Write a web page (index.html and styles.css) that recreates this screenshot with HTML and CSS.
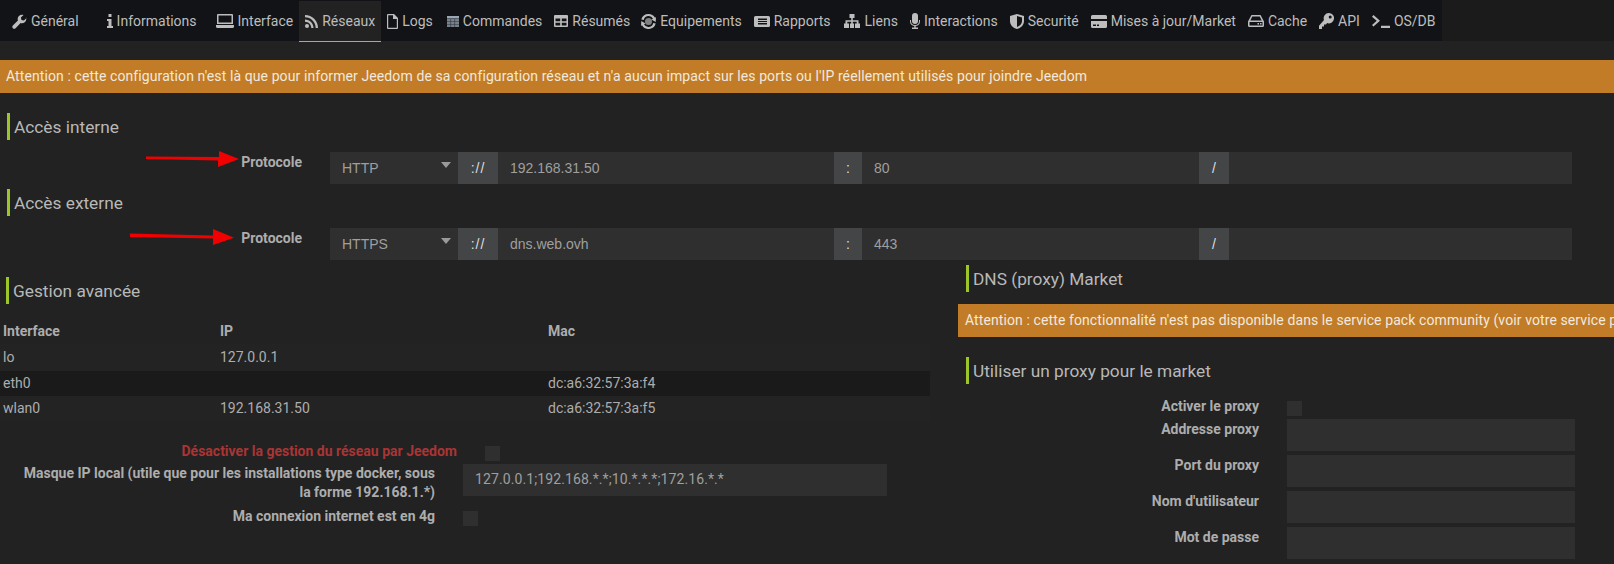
FILE: index.html
```html
<!DOCTYPE html>
<html lang="fr">
<head>
    <meta charset="UTF-8">
    <title>Configuration - Réseaux</title>
    <link rel="stylesheet" href="styles.css">
</head>
<body>
    <div class="topbar">
        <div class="nav">
            <a class="tab"><svg width="15" height="15" viewBox="0 0 16 16"><path d="M15.5 4.2l-2.8 2.8-2.6-.6-.6-2.6L12.3 1C10.6.4 8.7.8 7.4 2.1 6.1 3.4 5.8 5.2 6.3 6.8L.9 12.2c-.8.8-.8 2.1 0 2.9.8.8 2.1.8 2.9 0l5.4-5.4c1.6.5 3.4.2 4.7-1.1 1.3-1.3 1.7-3.2 1.1-4.8z"/></svg>Général</a>
            <a class="tab tab-info"><svg width="6" height="14" viewBox="0 0 6 14"><path d="M1.5 0h3v3h-3zM0 5h4.5v7H6v2H0v-2h1.5V7H0z"/></svg>Informations</a>
            <a class="tab tab-interface"><svg width="18" height="14" viewBox="0 0 18 14"><path d="M2 0h14a1 1 0 0 1 1 1v9H1V1a1 1 0 0 1 1-1zm.5 1.5v7h13v-7zM0 11h18v1.5a1.5 1.5 0 0 1-1.5 1.5h-15A1.5 1.5 0 0 1 0 12.5z"/></svg>Interface</a>
            <a class="tab active"><svg width="13" height="13" viewBox="0 0 13 13"><circle cx="2" cy="11" r="2"/><path d="M0 4.5c4.7 0 8.500 3.800 8.500 8.500H6.300C6.300 9.500 3.500 6.700 0 6.700zM0 0c7.200 0 13 5.800 13 13h-2.300C10.700 7.100 5.900 2.300 0 2.300z"/></svg>Réseaux</a>
            <a class="tab"><svg width="11" height="15" viewBox="0 0 11 15"><path d="M1 0h6l4 4v10a1 1 0 0 1-1 1H1a1 1 0 0 1-1-1V1a1 1 0 0 1 1-1zm.2 1.200v12.600h8.600V5H6V1.200z"/></svg>Logs</a>
            <a class="tab tab-cmd"><svg class="ico-calc" width="12" height="11" viewBox="0 0 12 11"><path d="M0 0h12v2.500H0z"/><path opacity=".75" d="M0 3h12v8H0z"/><path fill="#121316" opacity=".7" d="M3.500 3h.6v8h-.6zM7.500 3h.6v8h-.6zM0 5.500h12v.6H0zM0 8h12v.6H0z"/></svg>Commandes</a>
            <a class="tab tab-resumes"><svg width="14" height="12" viewBox="0 0 14 12"><path fill-rule="evenodd" d="M1 0h12a1 1 0 0 1 1 1v10a1 1 0 0 1-1 1H1a1 1 0 0 1-1-1V1a1 1 0 0 1 1-1zm.500 3.500v2.800h4.700V3.500zm6.300 0v2.800h4.700V3.500zM1.500 7.700v2.800h4.700V7.700zm6.300 0v2.800h4.700V7.700z"/></svg>Résumés</a>
            <a class="tab"><svg width="15" height="15" viewBox="0 0 15 15"><path fill-rule="evenodd" d="M7.500 0a7.500 7.500 0 0 1 6.500 3.700L15 3l-.3 5-4.200-2.500 1.500-.8a5 5 0 0 0-9.300 1.300L.3 5.500A7.500 7.500 0 0 1 7.500 0zM.3 7l4.200 2.500-1.500.8a5 5 0 0 0 9.300-1.300l2.400.5A7.500 7.500 0 0 1 1 11.300L0 12z"/><circle cx="7.500" cy="7.500" r="3.500" opacity=".65"/></svg>Equipements</a>
            <a class="tab"><svg width="16" height="11" viewBox="0 0 16 11"><path fill-rule="evenodd" d="M1.500 0h13A1.500 1.500 0 0 1 16 1.500v8a1.500 1.500 0 0 1-1.500 1.500h-13A1.500 1.500 0 0 1 0 9.500v-8A1.500 1.500 0 0 1 1.500 0zM4 2.500V4h9V2.500zM4 5v1h9V5zm0 2v1.500h9V7z"/></svg>Rapports</a>
            <a class="tab"><svg width="18" height="14" viewBox="0 0 18 14"><path d="M6.500 0h5v4h-1.700v2.200H15.500V9.500h1.500V14h-5V9.500h1.700V7.800H9.800v1.700h1.200V14H7V9.500h1.200V7.800H4.300v1.700H6V14H1V9.500h1.500V6.200h5.700V4H6.500z"/></svg>Liens</a>
            <a class="tab"><svg width="10" height="16" viewBox="0 0 10 16"><path d="M5 0a3 3 0 0 1 3 3v5a3 3 0 0 1-6 0V3a3 3 0 0 1 3-3z"/><path d="M0 7h1v1a4 4 0 0 0 8 0V7h1v1a5 5 0 0 1-4.300 5v1.500H8V16H2v-1.500h2.300V13A5 5 0 0 1 0 8z"/></svg>Interactions</a>
            <a class="tab"><svg width="14" height="15" viewBox="0 0 14 15"><path fill-rule="evenodd" d="M7 0l7 2v5c0 4-3 7-7 8-4-1-7-4-7-8V2zm0 2v11c2.800-1 5-3.200 5-6V3.400z"/></svg>Securité</a>
            <a class="tab"><svg width="16" height="13" viewBox="0 0 16 13"><path fill-rule="evenodd" d="M1.500 0h13A1.500 1.500 0 0 1 16 1.500V4H0V1.500A1.500 1.500 0 0 1 1.500 0zM0 6h16v5.500a1.500 1.500 0 0 1-1.500 1.500h-13A1.500 1.500 0 0 1 0 11.500zm2 3.500V11h3V9.500zm4 0V11h2V9.500z"/></svg>Mises à jour/Market</a>
            <a class="tab"><svg width="16" height="12" viewBox="0 0 16 12"><path fill-rule="evenodd" d="M3.500 0h9L16 6.500v4A1.500 1.500 0 0 1 14.500 12h-13A1.500 1.500 0 0 1 0 10.500v-4zm.800 1.500L2.300 5.500h11.400l-2-4zM1.500 7v3.500h13V7zM9.500 8h1.500v1.500H9.500zm2.500 0h1.500v1.500H12z"/></svg>Cache</a>
            <a class="tab"><svg width="15" height="16" viewBox="0 0 15 16"><path fill-rule="evenodd" d="M9.800 0a5.200 5.200 0 1 1-1.700 10.100L7 11.500H5V13.500H3V16H0v-3.300l5-5.700A5.200 5.200 0 0 1 9.800 0zm1.400 2.400a1.500 1.500 0 1 0 0 3 1.500 1.500 0 0 0 0-3z"/></svg>API</a>
            <a class="tab"><svg width="18" height="13" viewBox="0 0 18 13"><path d="M1.500 0l6.500 5.800L1.500 11.600 0 9.900 4.700 5.800 0 1.700zM9 10.800h9V13H9z"/></svg>OS/DB</a>
        </div>
    </div>

    <div class="alert">Attention : cette configuration n'est là que pour informer Jeedom de sa configuration réseau et n'a aucun impact sur les ports ou l'IP réellement utilisés pour joindre Jeedom</div>

    <h3 class="title title-first">Accès interne</h3>
    <div class="proto-row">
        <label class="proto-label">Protocole</label>
        <div class="field select">HTTP</div>
        <div class="addon addon-scheme">://</div>
        <div class="field host">192.168.31.50</div>
        <div class="addon addon-port">:</div>
        <div class="field port">80</div>
        <div class="addon addon-path">/</div>
        <div class="field path"></div>
    </div>

    <h3 class="title title-next">Accès externe</h3>
    <div class="proto-row">
        <label class="proto-label">Protocole</label>
        <div class="field select">HTTPS</div>
        <div class="addon addon-scheme">://</div>
        <div class="field host">dns.web.ovh</div>
        <div class="addon addon-port">:</div>
        <div class="field port">443</div>
        <div class="addon addon-path">/</div>
        <div class="field path"></div>
    </div>

    <div class="columns">
        <div class="col-left">
            <h3 class="title title-advanced">Gestion avancée</h3>
            <table class="net-table">
                <thead>
                    <tr><th>Interface</th><th>IP</th><th>Mac</th></tr>
                </thead>
                <tbody>
                    <tr class="first"><td>lo</td><td>127.0.0.1</td><td></td></tr>
                    <tr class="dark"><td>eth0</td><td></td><td>dc:a6:32:57:3a:f4</td></tr>
                    <tr><td>wlan0</td><td>192.168.31.50</td><td>dc:a6:32:57:3a:f5</td></tr>
                </tbody>
            </table>

            <div class="opt opt-disable">
                <label class="danger">Désactiver la gestion du réseau par Jeedom</label>
                <span class="check"></span>
            </div>
            <div class="opt opt-mask">
                <label>Masque IP local (utile que pour les installations type docker, sous la forme 192.168.1.*)</label>
                <div class="field mask">127.0.0.1;192.168.*.*;10.*.*.*;172.16.*.*</div>
            </div>
            <div class="opt opt-4g">
                <label>Ma connexion internet est en 4g</label>
                <span class="check"></span>
            </div>
        </div>

        <div class="col-right">
            <h3 class="title title-dns">DNS (proxy) Market</h3>
            <div class="alert alert-wide">Attention : cette fonctionnalité n'est pas disponible dans le service pack community (voir votre service pack)</div>
            <h3 class="title title-proxy">Utiliser un proxy pour le market</h3>
            <div class="proxy-form">
                <div class="proxy-row proxy-check"><label>Activer le proxy</label><span class="check"></span></div>
                <div class="proxy-row"><label>Addresse proxy</label><div class="field proxy-input"></div></div>
                <div class="proxy-row"><label>Port du proxy</label><div class="field proxy-input"></div></div>
                <div class="proxy-row"><label>Nom d'utilisateur</label><div class="field proxy-input"></div></div>
                <div class="proxy-row"><label>Mot de passe</label><div class="field proxy-input"></div></div>
            </div>
        </div>
    </div>

    <!-- red arrows annotated on the screenshot -->
    <svg class="arrows" width="300" height="260" viewBox="0 0 300 260">
        <path fill="#f00000" d="M146 156.500l73 .5V151l20 8-21 8v-6.500l-72-1.500z"/>
        <path fill="#f00000" d="M130 233.500l83 2V229l21 8.700-21 7.300v-6.500l-83-1.500z"/>
    </svg>
</body>
</html>
```

FILE: styles.css
```css
* {
    box-sizing: border-box;
}

html, body {
    height: 100%;
}

body {
    margin: 0;
    background-color: #222222;
    color: #adadad;
    font-family: Roboto, Arial, sans-serif;
    font-size: 14px;
    overflow: hidden;
    position: relative;
}

/* top tabs */
.topbar {
    height: 41px;
    background-color: #1b1b1b;
}

.nav {
    display: flex;
    align-items: flex-start;
    width: 1442px;
    height: 41px;
    padding: 1px 0 0 6px;
    background-color: #121316;
}

.tab {
    display: flex;
    align-items: center;
    gap: 4px;
    height: 40px;
    padding: 0 6px;
    color: #bdbdbd;
    white-space: nowrap;
}

.tab svg {
    flex: none;
    fill: currentColor;
}

.tab .ico-calc {
    fill: #9aa7b4;
}

.tab.active {
    height: 41px;
    background-color: #222222;
    border-bottom: 1px solid #9bc52a;
}

.tab-info {
    margin-left: 16px;
}

.tab-interface {
    margin-left: 7px;
}

.tab-cmd {
    margin-left: 2px;
}

.tab-resumes {
    padding-right: 5px;
}

/* orange notices */
.alert {
    height: 33px;
    margin-top: 19px;
    padding-left: 6px;
    line-height: 33px;
    letter-spacing: 0.1px;
    background-color: #c27c27;
    color: #f1e9df;
    white-space: nowrap;
}

.alert-wide {
    width: 700px;
    margin-top: 12px;
    padding-left: 7px;
}

/* section titles */
.title {
    height: 27px;
    margin: 0;
    padding-left: 4px;
    border-left: 3px solid #9bc52a;
    font-size: 17.3px;
    font-weight: 400;
    line-height: 29px;
    color: #b8b8b8;
}

.title-first {
    margin: 20px 0 0 7px;
}

.title-next {
    margin: 5px 0 0 7px;
}

.title-advanced {
    margin: 17px 0 0 6px;
}

.title-dns {
    margin: 5px 0 0 8px;
}

.title-proxy {
    margin: 20px 0 0 8px;
}

/* protocol rows */
.proto-row {
    display: flex;
    height: 32px;
    margin-top: 12px;
}

.proto-label {
    width: 302px;
    margin-right: 28px;
    font-weight: 700;
    line-height: 20px;
    text-align: right;
}

.field {
    height: 32px;
    padding-left: 12px;
    background-color: #2f2f2f;
    color: #9f9f9f;
    font-family: "Liberation Sans", Arial, sans-serif;
    line-height: 32px;
}

.select {
    position: relative;
    width: 128px;
}

.select::after {
    content: "";
    position: absolute;
    top: 10px;
    right: 7px;
    border-left: 5.5px solid transparent;
    border-right: 5.5px solid transparent;
    border-top: 6px solid #9a9a9a;
}

.addon {
    height: 32px;
    background-color: #444547;
    color: #dddddd;
    font-family: "Liberation Sans", Arial, sans-serif;
    line-height: 32px;
    text-align: center;
}

.addon-scheme {
    width: 40px;
    letter-spacing: 1px;
}

.addon-port {
    width: 28px;
}

.addon-path {
    width: 30px;
}

.host {
    width: 336px;
}

.port {
    width: 337px;
}

.path {
    width: 343px;
}

/* bottom columns */
.columns {
    display: flex;
}

.col-left {
    flex: none;
    width: 958px;
}

.col-right {
    flex: 1;
    min-width: 0;
    overflow: hidden;
}

.net-table {
    width: 930px;
    margin-top: 14px;
    border-collapse: collapse;
    table-layout: fixed;
}

.net-table th,
.net-table td {
    padding: 0 0 0 3px;
    text-align: left;
}

.net-table th {
    height: 26px;
    font-weight: 700;
}

.net-table td {
    height: 25px;
    padding-bottom: 2px;
    background-color: #232323;
}

.net-table tr.first td {
    height: 27px;
}

.net-table th:nth-child(1) {
    width: 217px;
}

.net-table th:nth-child(2) {
    width: 328px;
}

.net-table tr.dark td {
    background-color: #1a1a1a;
}

.opt {
    display: flex;
    gap: 28px;
}

.opt label {
    flex: none;
    width: 435px;
    font-weight: 700;
    line-height: 20px;
    text-align: right;
}

.opt-disable {
    margin-top: 20px;
}

.opt-disable label {
    width: 457px;
}

.opt .danger {
    color: #a93535;
}

.opt-mask {
    height: 32px;
    margin-top: 3px;
}

.opt-mask label {
    padding-left: 23px;
    line-height: 19px;
}

.opt-4g {
    margin-top: 10px;
}

.mask {
    width: 424px;
    font-family: Roboto, Arial, sans-serif;
    letter-spacing: 0.1px;
    line-height: 30px;
}

.check {
    flex: none;
    width: 15px;
    height: 15px;
    margin-top: 5px;
    background-color: #2f2f2f;
}

/* proxy form */
.proxy-form {
    margin-top: 12px;
}

.proxy-row {
    display: flex;
    gap: 28px;
    margin-top: 4px;
}

.proxy-row label {
    flex: none;
    width: 301px;
    font-weight: 700;
    line-height: 20px;
    text-align: right;
}

.proxy-check {
    margin-top: 0;
}

.proxy-check + .proxy-row {
    margin-top: 3px;
}

.proxy-input {
    width: 288px;
}

.arrows {
    position: absolute;
    top: 0;
    left: 0;
    pointer-events: none;
}
```
